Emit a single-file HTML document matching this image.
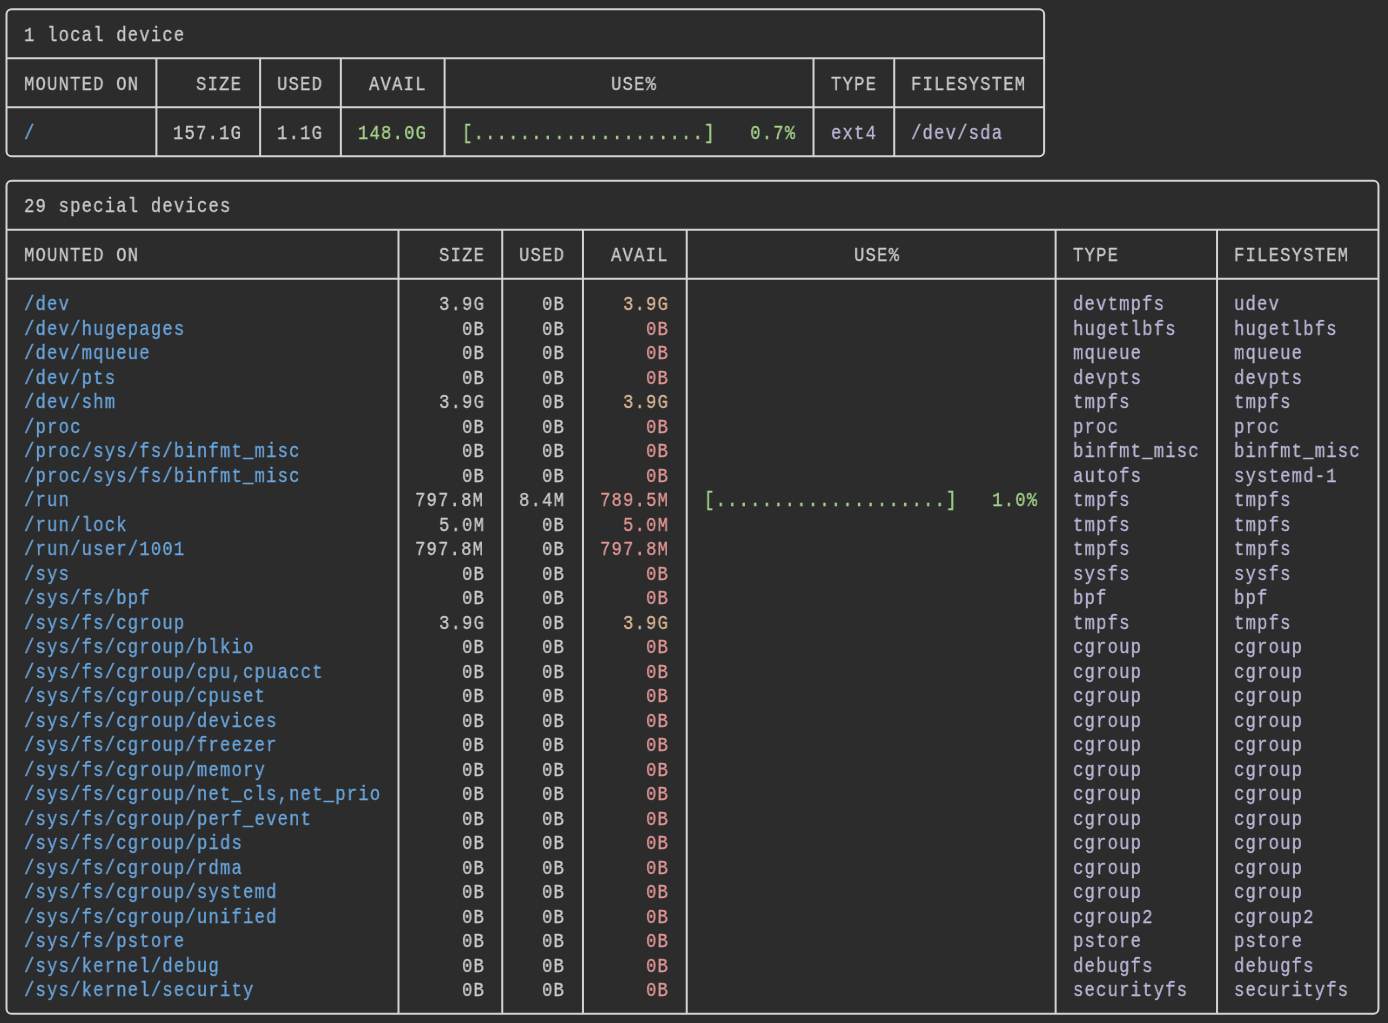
<!DOCTYPE html><html><head><meta charset="utf-8"><style>
html,body{margin:0;padding:0;width:1388px;height:1023px;overflow:hidden;background:#2c2c2c;}
.t{position:absolute;left:0;top:0;font-family:"Liberation Mono",monospace;font-size:19.8px;line-height:20px;white-space:pre;letter-spacing:1.3809px;transform:scaleX(0.87);transform-origin:0 0;will-change:transform;-webkit-text-stroke:0.3px currentColor;}
svg{position:absolute;left:0;top:0;}
</style></head><body>
<svg width="1388" height="1023" viewBox="0 0 1388 1023"><path d="M11.50,9.20 H1039.11 A5,5 0 0 1 1044.11,14.20 V151.20 A5,5 0 0 1 1039.11,156.20 H11.50 A5,5 0 0 1 6.50,151.20 V14.20 A5,5 0 0 1 11.50,9.20 Z M6.50,58.20 H1044.11 M6.50,107.20 H1044.11 M156.38,58.20 V156.20 M260.14,58.20 V156.20 M340.85,58.20 V156.20 M444.61,58.20 V156.20 M813.53,58.20 V156.20 M894.24,58.20 V156.20 M11.50,180.70 H1373.46 A5,5 0 0 1 1378.46,185.70 V1008.70 A5,5 0 0 1 1373.46,1013.70 H11.50 A5,5 0 0 1 6.50,1008.70 V185.70 A5,5 0 0 1 11.50,180.70 Z M6.50,229.70 H1378.46 M6.50,278.70 H1378.46 M398.49,229.70 V1013.70 M502.25,229.70 V1013.70 M582.95,229.70 V1013.70 M686.72,229.70 V1013.70 M1055.64,229.70 V1013.70 M1217.05,229.70 V1013.70" fill="none" stroke="#d4d4d4" stroke-width="2"/></svg>
<div class="t" style="left:23.50px;top:25.63px;color:#cacaca">1 local device</div>
<div class="t" style="left:23.50px;top:74.63px;color:#cacaca">MOUNTED ON</div>
<div class="t" style="left:196.43px;top:74.63px;color:#cacaca">SIZE</div>
<div class="t" style="left:277.14px;top:74.63px;color:#cacaca">USED</div>
<div class="t" style="left:369.37px;top:74.63px;color:#cacaca">AVAIL</div>
<div class="t" style="left:611.48px;top:74.63px;color:#cacaca">USE%</div>
<div class="t" style="left:830.53px;top:74.63px;color:#cacaca">TYPE</div>
<div class="t" style="left:911.23px;top:74.63px;color:#cacaca">FILESYSTEM</div>
<div class="t" style="left:23.50px;top:123.63px;color:#6aa6de">/</div>
<div class="t" style="left:173.38px;top:123.63px;color:#cacaca">157.1G</div>
<div class="t" style="left:277.14px;top:123.63px;color:#cacaca">1.1G</div>
<div class="t" style="left:357.84px;top:123.63px;color:#a6d48a">148.0G</div>
<div class="t" style="left:461.60px;top:123.63px;color:#a6d48a">[....................]   0.7%</div>
<div class="t" style="left:830.53px;top:123.63px;color:#bdb7d8">ext4</div>
<div class="t" style="left:911.23px;top:123.63px;color:#bdb7d8">/dev/sda</div>
<div class="t" style="left:23.50px;top:197.13px;color:#cacaca">29 special devices</div>
<div class="t" style="left:23.50px;top:246.13px;color:#cacaca">MOUNTED ON</div>
<div class="t" style="left:438.54px;top:246.13px;color:#cacaca">SIZE</div>
<div class="t" style="left:519.25px;top:246.13px;color:#cacaca">USED</div>
<div class="t" style="left:611.48px;top:246.13px;color:#cacaca">AVAIL</div>
<div class="t" style="left:853.59px;top:246.13px;color:#cacaca">USE%</div>
<div class="t" style="left:1072.64px;top:246.13px;color:#cacaca">TYPE</div>
<div class="t" style="left:1234.04px;top:246.13px;color:#cacaca">FILESYSTEM</div>
<div class="t" style="left:23.50px;top:295.13px;color:#6aa6de">/dev</div>
<div class="t" style="left:438.54px;top:295.13px;color:#cacaca">3.9G</div>
<div class="t" style="left:542.30px;top:295.13px;color:#cacaca">0B</div>
<div class="t" style="left:623.01px;top:295.13px;color:#dcb896">3.9G</div>
<div class="t" style="left:1072.64px;top:295.13px;color:#bdb7d8">devtmpfs</div>
<div class="t" style="left:1234.04px;top:295.13px;color:#bdb7d8">udev</div>
<div class="t" style="left:23.50px;top:319.63px;color:#6aa6de">/dev/hugepages</div>
<div class="t" style="left:461.60px;top:319.63px;color:#cacaca">0B</div>
<div class="t" style="left:542.30px;top:319.63px;color:#cacaca">0B</div>
<div class="t" style="left:646.06px;top:319.63px;color:#e09595">0B</div>
<div class="t" style="left:1072.64px;top:319.63px;color:#bdb7d8">hugetlbfs</div>
<div class="t" style="left:1234.04px;top:319.63px;color:#bdb7d8">hugetlbfs</div>
<div class="t" style="left:23.50px;top:344.13px;color:#6aa6de">/dev/mqueue</div>
<div class="t" style="left:461.60px;top:344.13px;color:#cacaca">0B</div>
<div class="t" style="left:542.30px;top:344.13px;color:#cacaca">0B</div>
<div class="t" style="left:646.06px;top:344.13px;color:#e09595">0B</div>
<div class="t" style="left:1072.64px;top:344.13px;color:#bdb7d8">mqueue</div>
<div class="t" style="left:1234.04px;top:344.13px;color:#bdb7d8">mqueue</div>
<div class="t" style="left:23.50px;top:368.63px;color:#6aa6de">/dev/pts</div>
<div class="t" style="left:461.60px;top:368.63px;color:#cacaca">0B</div>
<div class="t" style="left:542.30px;top:368.63px;color:#cacaca">0B</div>
<div class="t" style="left:646.06px;top:368.63px;color:#e09595">0B</div>
<div class="t" style="left:1072.64px;top:368.63px;color:#bdb7d8">devpts</div>
<div class="t" style="left:1234.04px;top:368.63px;color:#bdb7d8">devpts</div>
<div class="t" style="left:23.50px;top:393.13px;color:#6aa6de">/dev/shm</div>
<div class="t" style="left:438.54px;top:393.13px;color:#cacaca">3.9G</div>
<div class="t" style="left:542.30px;top:393.13px;color:#cacaca">0B</div>
<div class="t" style="left:623.01px;top:393.13px;color:#dcb896">3.9G</div>
<div class="t" style="left:1072.64px;top:393.13px;color:#bdb7d8">tmpfs</div>
<div class="t" style="left:1234.04px;top:393.13px;color:#bdb7d8">tmpfs</div>
<div class="t" style="left:23.50px;top:417.63px;color:#6aa6de">/proc</div>
<div class="t" style="left:461.60px;top:417.63px;color:#cacaca">0B</div>
<div class="t" style="left:542.30px;top:417.63px;color:#cacaca">0B</div>
<div class="t" style="left:646.06px;top:417.63px;color:#e09595">0B</div>
<div class="t" style="left:1072.64px;top:417.63px;color:#bdb7d8">proc</div>
<div class="t" style="left:1234.04px;top:417.63px;color:#bdb7d8">proc</div>
<div class="t" style="left:23.50px;top:442.13px;color:#6aa6de">/proc/sys/fs/binfmt_misc</div>
<div class="t" style="left:461.60px;top:442.13px;color:#cacaca">0B</div>
<div class="t" style="left:542.30px;top:442.13px;color:#cacaca">0B</div>
<div class="t" style="left:646.06px;top:442.13px;color:#e09595">0B</div>
<div class="t" style="left:1072.64px;top:442.13px;color:#bdb7d8">binfmt_misc</div>
<div class="t" style="left:1234.04px;top:442.13px;color:#bdb7d8">binfmt_misc</div>
<div class="t" style="left:23.50px;top:466.63px;color:#6aa6de">/proc/sys/fs/binfmt_misc</div>
<div class="t" style="left:461.60px;top:466.63px;color:#cacaca">0B</div>
<div class="t" style="left:542.30px;top:466.63px;color:#cacaca">0B</div>
<div class="t" style="left:646.06px;top:466.63px;color:#e09595">0B</div>
<div class="t" style="left:1072.64px;top:466.63px;color:#bdb7d8">autofs</div>
<div class="t" style="left:1234.04px;top:466.63px;color:#bdb7d8">systemd-1</div>
<div class="t" style="left:23.50px;top:491.13px;color:#6aa6de">/run</div>
<div class="t" style="left:415.48px;top:491.13px;color:#cacaca">797.8M</div>
<div class="t" style="left:519.25px;top:491.13px;color:#cacaca">8.4M</div>
<div class="t" style="left:599.95px;top:491.13px;color:#e09595">789.5M</div>
<div class="t" style="left:703.71px;top:491.13px;color:#a6d48a">[....................]   1.0%</div>
<div class="t" style="left:1072.64px;top:491.13px;color:#bdb7d8">tmpfs</div>
<div class="t" style="left:1234.04px;top:491.13px;color:#bdb7d8">tmpfs</div>
<div class="t" style="left:23.50px;top:515.63px;color:#6aa6de">/run/lock</div>
<div class="t" style="left:438.54px;top:515.63px;color:#cacaca">5.0M</div>
<div class="t" style="left:542.30px;top:515.63px;color:#cacaca">0B</div>
<div class="t" style="left:623.01px;top:515.63px;color:#e09595">5.0M</div>
<div class="t" style="left:1072.64px;top:515.63px;color:#bdb7d8">tmpfs</div>
<div class="t" style="left:1234.04px;top:515.63px;color:#bdb7d8">tmpfs</div>
<div class="t" style="left:23.50px;top:540.13px;color:#6aa6de">/run/user/1001</div>
<div class="t" style="left:415.48px;top:540.13px;color:#cacaca">797.8M</div>
<div class="t" style="left:542.30px;top:540.13px;color:#cacaca">0B</div>
<div class="t" style="left:599.95px;top:540.13px;color:#e09595">797.8M</div>
<div class="t" style="left:1072.64px;top:540.13px;color:#bdb7d8">tmpfs</div>
<div class="t" style="left:1234.04px;top:540.13px;color:#bdb7d8">tmpfs</div>
<div class="t" style="left:23.50px;top:564.63px;color:#6aa6de">/sys</div>
<div class="t" style="left:461.60px;top:564.63px;color:#cacaca">0B</div>
<div class="t" style="left:542.30px;top:564.63px;color:#cacaca">0B</div>
<div class="t" style="left:646.06px;top:564.63px;color:#e09595">0B</div>
<div class="t" style="left:1072.64px;top:564.63px;color:#bdb7d8">sysfs</div>
<div class="t" style="left:1234.04px;top:564.63px;color:#bdb7d8">sysfs</div>
<div class="t" style="left:23.50px;top:589.13px;color:#6aa6de">/sys/fs/bpf</div>
<div class="t" style="left:461.60px;top:589.13px;color:#cacaca">0B</div>
<div class="t" style="left:542.30px;top:589.13px;color:#cacaca">0B</div>
<div class="t" style="left:646.06px;top:589.13px;color:#e09595">0B</div>
<div class="t" style="left:1072.64px;top:589.13px;color:#bdb7d8">bpf</div>
<div class="t" style="left:1234.04px;top:589.13px;color:#bdb7d8">bpf</div>
<div class="t" style="left:23.50px;top:613.63px;color:#6aa6de">/sys/fs/cgroup</div>
<div class="t" style="left:438.54px;top:613.63px;color:#cacaca">3.9G</div>
<div class="t" style="left:542.30px;top:613.63px;color:#cacaca">0B</div>
<div class="t" style="left:623.01px;top:613.63px;color:#dcb896">3.9G</div>
<div class="t" style="left:1072.64px;top:613.63px;color:#bdb7d8">tmpfs</div>
<div class="t" style="left:1234.04px;top:613.63px;color:#bdb7d8">tmpfs</div>
<div class="t" style="left:23.50px;top:638.13px;color:#6aa6de">/sys/fs/cgroup/blkio</div>
<div class="t" style="left:461.60px;top:638.13px;color:#cacaca">0B</div>
<div class="t" style="left:542.30px;top:638.13px;color:#cacaca">0B</div>
<div class="t" style="left:646.06px;top:638.13px;color:#e09595">0B</div>
<div class="t" style="left:1072.64px;top:638.13px;color:#bdb7d8">cgroup</div>
<div class="t" style="left:1234.04px;top:638.13px;color:#bdb7d8">cgroup</div>
<div class="t" style="left:23.50px;top:662.63px;color:#6aa6de">/sys/fs/cgroup/cpu,cpuacct</div>
<div class="t" style="left:461.60px;top:662.63px;color:#cacaca">0B</div>
<div class="t" style="left:542.30px;top:662.63px;color:#cacaca">0B</div>
<div class="t" style="left:646.06px;top:662.63px;color:#e09595">0B</div>
<div class="t" style="left:1072.64px;top:662.63px;color:#bdb7d8">cgroup</div>
<div class="t" style="left:1234.04px;top:662.63px;color:#bdb7d8">cgroup</div>
<div class="t" style="left:23.50px;top:687.13px;color:#6aa6de">/sys/fs/cgroup/cpuset</div>
<div class="t" style="left:461.60px;top:687.13px;color:#cacaca">0B</div>
<div class="t" style="left:542.30px;top:687.13px;color:#cacaca">0B</div>
<div class="t" style="left:646.06px;top:687.13px;color:#e09595">0B</div>
<div class="t" style="left:1072.64px;top:687.13px;color:#bdb7d8">cgroup</div>
<div class="t" style="left:1234.04px;top:687.13px;color:#bdb7d8">cgroup</div>
<div class="t" style="left:23.50px;top:711.63px;color:#6aa6de">/sys/fs/cgroup/devices</div>
<div class="t" style="left:461.60px;top:711.63px;color:#cacaca">0B</div>
<div class="t" style="left:542.30px;top:711.63px;color:#cacaca">0B</div>
<div class="t" style="left:646.06px;top:711.63px;color:#e09595">0B</div>
<div class="t" style="left:1072.64px;top:711.63px;color:#bdb7d8">cgroup</div>
<div class="t" style="left:1234.04px;top:711.63px;color:#bdb7d8">cgroup</div>
<div class="t" style="left:23.50px;top:736.13px;color:#6aa6de">/sys/fs/cgroup/freezer</div>
<div class="t" style="left:461.60px;top:736.13px;color:#cacaca">0B</div>
<div class="t" style="left:542.30px;top:736.13px;color:#cacaca">0B</div>
<div class="t" style="left:646.06px;top:736.13px;color:#e09595">0B</div>
<div class="t" style="left:1072.64px;top:736.13px;color:#bdb7d8">cgroup</div>
<div class="t" style="left:1234.04px;top:736.13px;color:#bdb7d8">cgroup</div>
<div class="t" style="left:23.50px;top:760.63px;color:#6aa6de">/sys/fs/cgroup/memory</div>
<div class="t" style="left:461.60px;top:760.63px;color:#cacaca">0B</div>
<div class="t" style="left:542.30px;top:760.63px;color:#cacaca">0B</div>
<div class="t" style="left:646.06px;top:760.63px;color:#e09595">0B</div>
<div class="t" style="left:1072.64px;top:760.63px;color:#bdb7d8">cgroup</div>
<div class="t" style="left:1234.04px;top:760.63px;color:#bdb7d8">cgroup</div>
<div class="t" style="left:23.50px;top:785.13px;color:#6aa6de">/sys/fs/cgroup/net_cls,net_prio</div>
<div class="t" style="left:461.60px;top:785.13px;color:#cacaca">0B</div>
<div class="t" style="left:542.30px;top:785.13px;color:#cacaca">0B</div>
<div class="t" style="left:646.06px;top:785.13px;color:#e09595">0B</div>
<div class="t" style="left:1072.64px;top:785.13px;color:#bdb7d8">cgroup</div>
<div class="t" style="left:1234.04px;top:785.13px;color:#bdb7d8">cgroup</div>
<div class="t" style="left:23.50px;top:809.63px;color:#6aa6de">/sys/fs/cgroup/perf_event</div>
<div class="t" style="left:461.60px;top:809.63px;color:#cacaca">0B</div>
<div class="t" style="left:542.30px;top:809.63px;color:#cacaca">0B</div>
<div class="t" style="left:646.06px;top:809.63px;color:#e09595">0B</div>
<div class="t" style="left:1072.64px;top:809.63px;color:#bdb7d8">cgroup</div>
<div class="t" style="left:1234.04px;top:809.63px;color:#bdb7d8">cgroup</div>
<div class="t" style="left:23.50px;top:834.13px;color:#6aa6de">/sys/fs/cgroup/pids</div>
<div class="t" style="left:461.60px;top:834.13px;color:#cacaca">0B</div>
<div class="t" style="left:542.30px;top:834.13px;color:#cacaca">0B</div>
<div class="t" style="left:646.06px;top:834.13px;color:#e09595">0B</div>
<div class="t" style="left:1072.64px;top:834.13px;color:#bdb7d8">cgroup</div>
<div class="t" style="left:1234.04px;top:834.13px;color:#bdb7d8">cgroup</div>
<div class="t" style="left:23.50px;top:858.63px;color:#6aa6de">/sys/fs/cgroup/rdma</div>
<div class="t" style="left:461.60px;top:858.63px;color:#cacaca">0B</div>
<div class="t" style="left:542.30px;top:858.63px;color:#cacaca">0B</div>
<div class="t" style="left:646.06px;top:858.63px;color:#e09595">0B</div>
<div class="t" style="left:1072.64px;top:858.63px;color:#bdb7d8">cgroup</div>
<div class="t" style="left:1234.04px;top:858.63px;color:#bdb7d8">cgroup</div>
<div class="t" style="left:23.50px;top:883.13px;color:#6aa6de">/sys/fs/cgroup/systemd</div>
<div class="t" style="left:461.60px;top:883.13px;color:#cacaca">0B</div>
<div class="t" style="left:542.30px;top:883.13px;color:#cacaca">0B</div>
<div class="t" style="left:646.06px;top:883.13px;color:#e09595">0B</div>
<div class="t" style="left:1072.64px;top:883.13px;color:#bdb7d8">cgroup</div>
<div class="t" style="left:1234.04px;top:883.13px;color:#bdb7d8">cgroup</div>
<div class="t" style="left:23.50px;top:907.63px;color:#6aa6de">/sys/fs/cgroup/unified</div>
<div class="t" style="left:461.60px;top:907.63px;color:#cacaca">0B</div>
<div class="t" style="left:542.30px;top:907.63px;color:#cacaca">0B</div>
<div class="t" style="left:646.06px;top:907.63px;color:#e09595">0B</div>
<div class="t" style="left:1072.64px;top:907.63px;color:#bdb7d8">cgroup2</div>
<div class="t" style="left:1234.04px;top:907.63px;color:#bdb7d8">cgroup2</div>
<div class="t" style="left:23.50px;top:932.13px;color:#6aa6de">/sys/fs/pstore</div>
<div class="t" style="left:461.60px;top:932.13px;color:#cacaca">0B</div>
<div class="t" style="left:542.30px;top:932.13px;color:#cacaca">0B</div>
<div class="t" style="left:646.06px;top:932.13px;color:#e09595">0B</div>
<div class="t" style="left:1072.64px;top:932.13px;color:#bdb7d8">pstore</div>
<div class="t" style="left:1234.04px;top:932.13px;color:#bdb7d8">pstore</div>
<div class="t" style="left:23.50px;top:956.63px;color:#6aa6de">/sys/kernel/debug</div>
<div class="t" style="left:461.60px;top:956.63px;color:#cacaca">0B</div>
<div class="t" style="left:542.30px;top:956.63px;color:#cacaca">0B</div>
<div class="t" style="left:646.06px;top:956.63px;color:#e09595">0B</div>
<div class="t" style="left:1072.64px;top:956.63px;color:#bdb7d8">debugfs</div>
<div class="t" style="left:1234.04px;top:956.63px;color:#bdb7d8">debugfs</div>
<div class="t" style="left:23.50px;top:981.13px;color:#6aa6de">/sys/kernel/security</div>
<div class="t" style="left:461.60px;top:981.13px;color:#cacaca">0B</div>
<div class="t" style="left:542.30px;top:981.13px;color:#cacaca">0B</div>
<div class="t" style="left:646.06px;top:981.13px;color:#e09595">0B</div>
<div class="t" style="left:1072.64px;top:981.13px;color:#bdb7d8">securityfs</div>
<div class="t" style="left:1234.04px;top:981.13px;color:#bdb7d8">securityfs</div>
</body></html>
